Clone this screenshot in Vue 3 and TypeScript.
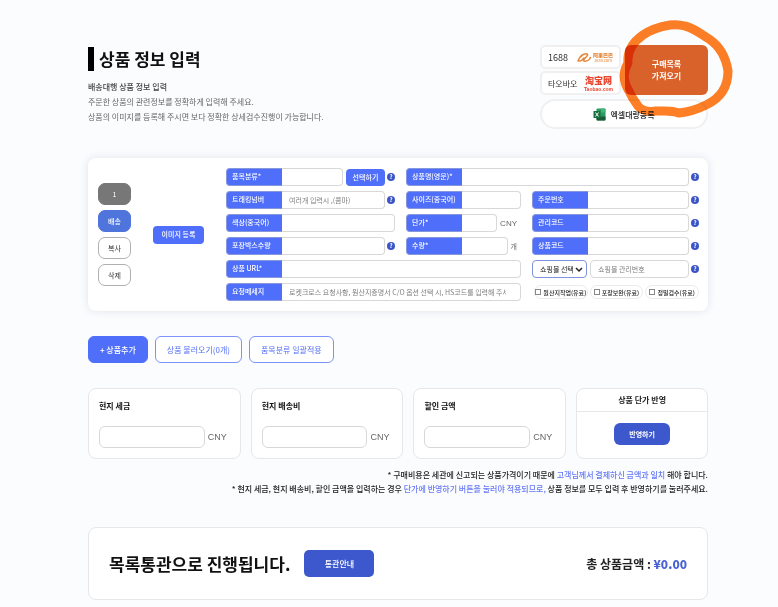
<script setup lang="ts">
import { ref } from 'vue'

interface Cost {
  id: string
  title: string
}

const costs: Cost[] = [
  { id: 'tax', title: '현지 세금' },
  { id: 'shipping', title: '현지 배송비' },
  { id: 'discount', title: '할인 금액' },
]

const services = ref([
  { id: 'origin', title: '원산지작업(유료)', checked: false },
  { id: 'storage', title: '포장보완(유료)', checked: false },
  { id: 'inspect', title: '정밀검수(유료)', checked: false },
])

const mall = ref('')
</script>

<template>
  <main class="page">
    <header class="head">
      <div class="intro">
        <h1>상품 정보 입력</h1>
        <p class="lead">배송대행 상품 정보 입력</p>
        <p>주문한 상품의 관련정보를 정확하게 입력해 주세요.</p>
        <p>상품의 이미지를 등록해 주시면 보다 정확한 상세검수진행이 가능합니다.</p>
      </div>
      <div class="imports">
        <a class="market" href="#">
          <span class="num">1688</span>
          <span class="alibaba">
            <svg viewBox="0 0 28 20" width="15" height="11" aria-hidden="true">
              <path d="M2 16C5 9 11 3 17 3c5 0 2 5-2 8-3 3-4 6 0 6 5 0 9-4 10-7M2 16c3 2 8-1 11-5M8 8c2-3 6-5 9-5" fill="none" stroke="#e5873a" stroke-width="3" stroke-linecap="round" />
            </svg>
            <span class="stack"><b>阿里巴巴</b><small>1688.com</small></span>
          </span>
        </a>
        <a class="market" href="#">
          <span>타오바오</span>
          <span class="stack taobao"><b>淘宝网</b><small>Taobao.com</small></span>
        </a>
        <button type="button" class="fetch">구매목록<br />가져오기</button>
        <button type="button" class="excel">
          <svg viewBox="0 0 26 26" width="13" height="13" aria-hidden="true">
            <rect x="7" y="1" width="18" height="24" rx="2" fill="#2a9a60" />
            <path d="M16 1h7a2 2 0 0 1 2 2v6h-9z" fill="#46b37a" />
            <path d="M7 17h18v6a2 2 0 0 1-2 2H9a2 2 0 0 1-2-2z" fill="#185c37" />
            <rect x="1" y="6" width="14" height="14" rx="1" fill="#17703f" />
            <path d="M5 9l6 8M11 9l-6 8" stroke="#fff" stroke-width="2" />
          </svg>
          <span>엑셀대량등록</span>
        </button>
        <svg class="marker" viewBox="0 0 116 104" width="116" height="104" aria-hidden="true">
          <path d="M10 46C9 35 15 25 25 18C35 11 46 9 52 8Q60 7 67 9C76 11 81 16 91 22C103 30 108 41 110 54C110 70 103 81 88 88C78 93 71 95 61 96C54 93 48 94 38 94C32 95 24 94 20 89C17 85 14 81 11 74C6 66 4 56 10 46Z" fill="none" stroke="#ff7f27" stroke-width="9" stroke-linejoin="round" />
        </svg>
      </div>
    </header>

    <section class="item">
      <div class="actions">
        <button type="button" class="index">1</button>
        <button type="button" class="ship">배송</button>
        <button type="button">복사</button>
        <button type="button">삭제</button>
      </div>
      <div class="photo"><button type="button">이미지 등록</button></div>
      <div class="fields">
        <div class="field">
          <label for="category">품목분류*</label><input id="category" type="text" />
          <button type="button" class="pick">선택하기</button>
          <button type="button" class="help" aria-label="도움말">?</button>
        </div>
        <div class="field span2">
          <label for="name">상품명(영문)*</label><input id="name" type="text" />
          <button type="button" class="help" aria-label="도움말">?</button>
        </div>

        <div class="field">
          <label for="tracking">트래킹넘버</label><input id="tracking" type="text" placeholder="여러개 입력시 ,(콤마)" />
          <button type="button" class="help" aria-label="도움말">?</button>
        </div>
        <div class="field"><label for="size">사이즈(중국어)</label><input id="size" type="text" /></div>
        <div class="field">
          <label for="order">주문번호</label><input id="order" type="text" />
          <button type="button" class="help" aria-label="도움말">?</button>
        </div>

        <div class="field"><label for="color">색상(중국어)</label><input id="color" type="text" /></div>
        <div class="field"><label for="price">단가*</label><input id="price" type="text" /><span class="unit">CNY</span></div>
        <div class="field">
          <label for="manage">관리코드</label><input id="manage" type="text" />
          <button type="button" class="help" aria-label="도움말">?</button>
        </div>

        <div class="field">
          <label for="boxes">포장박스수량</label><input id="boxes" type="text" />
          <button type="button" class="help" aria-label="도움말">?</button>
        </div>
        <div class="field"><label for="qty">수량*</label><input id="qty" type="text" /><span class="unit ko">개</span></div>
        <div class="field">
          <label for="code">상품코드</label><input id="code" type="text" />
          <button type="button" class="help" aria-label="도움말">?</button>
        </div>

        <div class="field span2"><label for="url">상품 URL*</label><input id="url" type="text" /></div>
        <div class="field">
          <span class="select">
            <select v-model="mall" aria-label="쇼핑몰 선택"><option value="">쇼핑몰 선택</option></select>
            <svg viewBox="0 0 8 6" width="8" height="6" aria-hidden="true"><path d="M1 1l3 3 3-3" fill="none" stroke="#222" stroke-width="1.5" /></svg>
          </span>
          <input class="solo" type="text" placeholder="쇼핑몰 관리번호" aria-label="쇼핑몰 관리번호" />
          <button type="button" class="help" aria-label="도움말">?</button>
        </div>

        <div class="field span2">
          <label for="memo">요청메세지</label>
          <input id="memo" class="memo" type="text" placeholder="로켓크로스 요청사항, 원산지증명서 C/O 옵션 선택 시, HS코드를 입력해 주세요." />
        </div>
        <div class="services">
          <label v-for="s in services" :key="s.id"><input v-model="s.checked" type="checkbox" />{{ s.title }}</label>
        </div>
      </div>
    </section>

    <div class="toolbar">
      <button type="button" class="primary">+ 상품추가</button>
      <button type="button">상품 불러오기(0개)</button>
      <button type="button">품목분류 일괄적용</button>
    </div>

    <section class="costs">
      <div v-for="c in costs" :key="c.id" class="panel cost">
        <label :for="c.id">{{ c.title }}</label>
        <div class="amount"><input :id="c.id" type="text" /><span class="unit">CNY</span></div>
      </div>
      <div class="panel apply">
        <h2>상품 단가 반영</h2>
        <div><button type="button">반영하기</button></div>
      </div>
    </section>

    <div class="notes">
      <p>* 구매비용은 세관에 신고되는 상품가격이기 때문에 <em>고객님께서 결제하신 금액과 일치</em> 해야 합니다.</p>
      <p>* 현지 세금, 현지 배송비, 할인 금액을 입력하는 경우 <em>단가에 반영하기 버튼을 눌러야 적용되므로,</em> 상품 정보를 모두 입력 후 반영하기를 눌러주세요.</p>
    </div>

    <section class="panel summary">
      <h2>목록통관으로 진행됩니다.</h2>
      <button type="button">통관안내</button>
      <p>총 상품금액 : <strong>¥0.00</strong></p>
    </section>
  </main>
</template>

<style>
body {
  background: #fbfcfe;
}
</style>

<style scoped>
.page {
  padding: 45px 70px 7px 88px;
  font-family: "Noto Sans CJK KR", "Noto Sans", sans-serif;
  font-size: 8px;
  line-height: 15px;
  color: #222;
}
.page * {
  box-sizing: border-box;
}
h1, h2, p {
  margin: 0;
}
button, input, select {
  font: inherit;
  margin: 0;
}
button {
  padding: 0;
  border: 0;
  cursor: pointer;
  white-space: nowrap;
}
.head {
  display: flex;
  justify-content: space-between;
  margin-bottom: 32px;
}
.intro {
  padding-top: 2px;
  color: #666;
}
h1 {
  margin-bottom: 8px;
  padding-left: 5px;
  border-left: 6px solid #000;
  font-size: 17px;
  line-height: 24px;
  color: #111;
}
.lead {
  font-weight: 500;
  color: #444;
}
.imports {
  position: relative;
  display: grid;
  grid-template-columns: 81px 83px;
  grid-template-rows: 24px 24px 29px;
  column-gap: 4px;
  row-gap: 2px;
  color: #333;
}
.market {
  grid-column: 1;
  display: flex;
  align-items: center;
  justify-content: space-between;
  padding: 0 6px;
  border: 2px solid #f0f0f1;
  border-radius: 5px;
  background: #fff;
  color: #333;
  text-decoration: none;
}
.num {
  font-size: 9px;
}
.alibaba {
  display: flex;
  align-items: center;
  gap: 1px;
}
.stack {
  display: flex;
  flex-direction: column;
  align-items: center;
  font-family: "Noto Sans CJK SC", sans-serif;
  color: #e5873a;
}
.stack b {
  font-size: 5px;
  font-weight: 900;
  line-height: 7px;
}
.stack small {
  font-size: 4px;
  line-height: 5px;
}
.taobao {
  color: #e8452f;
}
.taobao b {
  font-size: 9px;
  line-height: 12px;
}
.taobao small {
  font-family: "Liberation Sans", sans-serif;
  font-size: 5px;
  font-weight: 700;
}
.fetch {
  grid-column: 2;
  grid-row: 1 / 3;
  border-radius: 6px;
  background: #d9622b;
  color: #fff;
  font-weight: 700;
  line-height: 12px;
}
.excel {
  grid-column: 1 / 3;
  grid-row: 3;
  display: flex;
  align-items: center;
  justify-content: center;
  gap: 4px;
  margin-top: 2px;
  height: 30px;
  border: 2px solid #f0f0f1;
  border-radius: 15px;
  background: #fff;
  color: #222;
  font-weight: 500;
}
.marker {
  position: absolute;
  top: -28px;
  right: -26px;
  mix-blend-mode: multiply;
  pointer-events: none;
}
.item {
  display: grid;
  grid-template-columns: 33px 51px 1fr;
  column-gap: 22px;
  align-items: center;
  padding: 10px 9px 10px 10px;
  border-radius: 8px;
  background: #fff;
  box-shadow: 0 0 8px rgba(40, 50, 80, 0.12);
  font-size: 7px;
}
.actions {
  display: grid;
  gap: 5px;
}
.actions button {
  height: 22px;
  border: 1px solid #b0b0b0;
  border-radius: 7px;
  background: #fff;
  color: #333;
}
.actions .index {
  border-color: #777;
  background: #777;
  color: #fff;
}
.actions .ship {
  border-color: #4f74dc;
  background: #4f74dc;
  color: #fff;
  font-weight: 500;
}
.photo button {
  width: 100%;
  height: 18px;
  border-radius: 4px;
  background: #4f6ffa;
  color: #fff;
  font-weight: 500;
}
.fields {
  display: grid;
  grid-template-columns: 169fr 115fr 167fr;
  column-gap: 11px;
  row-gap: 5px;
}
.span2 {
  grid-column: span 2;
}
.field {
  display: flex;
  align-items: center;
  min-width: 0;
  height: 18px;
}
.field label {
  flex: 0 0 56px;
  height: 18px;
  padding-left: 5px;
  border: 1px solid #8797dc;
  border-right: 0;
  border-radius: 4px 0 0 4px;
  background: #4f6ffa;
  color: #fff;
  font-weight: 500;
  line-height: 14px;
  white-space: nowrap;
}
.field input {
  flex: 1;
  min-width: 0;
  width: 0;
  height: 18px;
  padding: 0 7px;
  border: 1px solid #d8d8d8;
  border-left: 0;
  border-radius: 0 4px 4px 0;
  outline: 0;
  background: #fff;
  color: #444;
}
.field .solo {
  margin-left: 3px;
  border-left: 1px solid #d8d8d8;
  border-radius: 4px;
}
.field .memo {
  padding-right: 14px;
}
input::placeholder {
  color: #808080;
  opacity: 1;
}
.pick {
  width: 39px;
  height: 17px;
  margin-left: 3px;
  border-radius: 4px;
  background: #4f6ffa;
  color: #fff;
  font-weight: 500;
}
.help {
  flex: 0 0 8px;
  height: 8px;
  margin-left: 2px;
  border-radius: 50%;
  background: #3b55c8;
  color: #fff;
  font-size: 6px;
  font-weight: 700;
  line-height: 8px;
}
.unit {
  margin: 0 4px 0 3px;
  font-family: "Liberation Sans", sans-serif;
  font-size: 8px;
  color: #666;
}
.ko {
  font-family: "Noto Sans CJK KR", sans-serif;
  font-size: 7px;
}
.select {
  position: relative;
  flex: 0 0 55px;
  height: 18px;
}
.select select {
  width: 100%;
  height: 18px;
  padding: 0 0 0 7px;
  border: 1px solid #7f92dc;
  border-radius: 4px;
  appearance: none;
  outline: 0;
  background: #fff;
  color: #222;
}
.select svg {
  position: absolute;
  top: 7px;
  right: 4px;
  pointer-events: none;
}
.services {
  display: grid;
  grid-template-columns: repeat(3, 1fr);
  gap: 2px;
  align-items: center;
  padding-left: 2px;
}
.services label {
  display: flex;
  align-items: center;
  justify-content: center;
  gap: 2px;
  height: 14px;
  border: 1px solid #ebebeb;
  border-radius: 7px;
  color: #222;
  font-size: 6px;
  font-weight: 500;
  white-space: nowrap;
}
.services input {
  flex: 0 0 6px;
  width: 6px;
  height: 6px;
  border: 1px solid #888;
  appearance: none;
}
.services input:checked {
  background: #4f6ffa;
}
.toolbar {
  display: flex;
  gap: 7px;
  margin: 25px 0;
}
.toolbar button {
  height: 27px;
  padding: 0 11px;
  border: 1px solid #7d93fa;
  border-radius: 6px;
  background: #fff;
  color: #5470f5;
}
.toolbar .primary {
  border-color: #4f6ffa;
  background: #4f6ffa;
  color: #fff;
  font-weight: 500;
}
.panel {
  border: 1px solid #e6e7e9;
  border-radius: 8px;
  background: #fff;
}
.costs {
  display: grid;
  grid-template-columns: 153fr 153fr 153fr 132fr;
  gap: 10px;
}
.cost {
  min-width: 0;
  height: 71px;
  padding: 9px 10px;
}
.cost label {
  display: block;
  color: #111;
  font-weight: 700;
}
.amount {
  display: flex;
  align-items: center;
  margin-top: 13px;
  padding-right: 3px;
}
.amount input {
  flex: 1;
  width: 0;
  min-width: 0;
  height: 22px;
  padding: 0 6px;
  border: 1px solid #d8d8d8;
  border-radius: 6px;
  outline: 0;
}
.amount .unit {
  margin-right: 0;
  font-size: 9px;
}
.apply {
  text-align: center;
}
.apply h2 {
  border-bottom: 1px solid #e6e7e9;
  font-size: 8px;
  line-height: 22px;
}
.apply button {
  width: 56px;
  height: 22px;
  margin-top: 11px;
  border-radius: 6px;
  background: #3d58cc;
  color: #fff;
  font-size: 7px;
  font-weight: 700;
}
.notes {
  margin-top: 9px;
  text-align: right;
  font-weight: 500;
  line-height: 14px;
}
.notes em {
  color: #6678f5;
  font-style: normal;
}
.summary {
  display: flex;
  align-items: center;
  margin-top: 31px;
  height: 73px;
  padding: 0 20px;
}
.summary h2 {
  font-size: 17px;
  font-weight: 700;
  line-height: 24px;
  color: #111;
}
.summary button {
  width: 70px;
  height: 27px;
  margin-left: 14px;
  border-radius: 5px;
  background: #3d58cc;
  color: #fff;
  font-weight: 500;
}
.summary p {
  margin-left: auto;
  font-size: 12px;
  font-weight: 700;
}
.summary strong {
  color: #4a63d2;
}
</style>
